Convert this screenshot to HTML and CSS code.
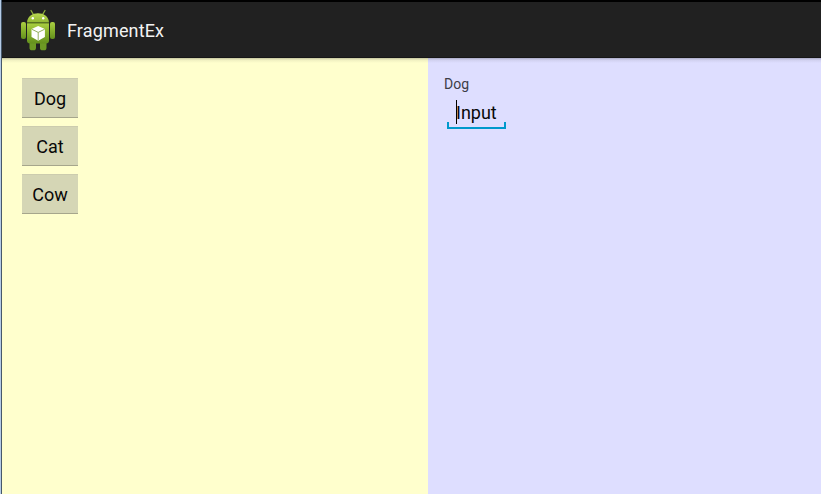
FILE: index.html
```
<!DOCTYPE html>
<html lang="en">
<head>
<meta charset="utf-8">
<title>FragmentEx</title>
<link rel="stylesheet" href="styles.css">
</head>
<body>
<div class="window">
  <header class="action-bar">
    <svg class="app-icon" width="36" height="42" viewBox="0 0 36 42" aria-hidden="true">
      <defs>
        <linearGradient id="body" x1="0" y1="0" x2="0" y2="1">
          <stop offset="0" stop-color="#abcf42"/>
          <stop offset=".5" stop-color="#86b02c"/>
          <stop offset="1" stop-color="#64901d"/>
        </linearGradient>
        <linearGradient id="head" x1="0" y1="0" x2="0" y2="1">
          <stop offset="0" stop-color="#b9d850"/>
          <stop offset="1" stop-color="#92b834"/>
        </linearGradient>
      </defs>
      <path d="M11 1.500l2.700 4.500M25 1.500l-2.700 4.500" stroke="#8fae3c" stroke-width="1.300" stroke-linecap="round"/>
      <rect x="1" y="13" width="5" height="17" rx="2" fill="url(#body)"/>
      <rect x="30" y="13" width="5" height="17" rx="2" fill="url(#body)"/>
      <rect x="9.500" y="29" width="6.500" height="12.300" rx="2.600" fill="#6d9924"/>
      <rect x="20" y="29" width="6.500" height="12.300" rx="2.600" fill="#6d9924"/>
      <path d="M7 14H29V31.500q0 3-3 3H10q-3 0-3-3z" fill="url(#body)"/>
      <path d="M7 13.500C7.500 1.300 28.500 1.300 29 13.500z" fill="url(#head)"/>
      <path d="M7 14H29" stroke="#59791d" stroke-width="1"/>
      <circle cx="12.800" cy="9.300" r="1.200" fill="#fff"/>
      <circle cx="23.200" cy="9.300" r="1.200" fill="#fff"/>
      <path d="M18.200 16.900l6.700 3v8.200l-6.700 3.700-6.700-3.700v-8.200z" fill="#fff"/>
      <path d="M11.700 20.200l6.500 3.200 6.500-3.200M18.200 23.400v8" fill="none" stroke="#799b35" stroke-width=".8"/>
    </svg>
    <h1 class="title">FragmentEx</h1>
  </header>
  <main class="fragments">
    <nav class="list-pane">
      <button class="choice">Dog</button>
      <button class="choice">Cat</button>
      <button class="choice">Cow</button>
    </nav>
    <section class="detail-pane">
      <div class="label">Dog</div>
      <div class="field"><span class="caret"></span>Input</div>
    </section>
  </main>
</div>
</body>
</html>
```
FILE: styles.css
```
* { box-sizing: border-box; }

body {
  margin: 0;
  font-family: Roboto, sans-serif;
  background: #ffffcd;
}

.window {
  display: flex;
  flex-direction: column;
  height: 494px;
  overflow: hidden;
  border-left: 1px solid #b5cbe6;
  box-shadow: inset 1px 0 #46586b;
  padding-left: 1px;
}

.action-bar {
  display: flex;
  align-items: flex-start;
  flex: none;
  height: 58px;
  border-top: 2px solid #000;
  border-bottom: 1px solid #161616;
  background: #212121;
  color: #f3f3f3;
}

.app-icon { margin: 7px 0 0 18px; }

.title {
  margin: 18px 0 0 11px;
  font-size: 18px;
  line-height: 22px;
  font-weight: 400;
  letter-spacing: 0.15px;
}

.fragments {
  display: flex;
  flex: 1;
  background: #ffffcd;
}

.list-pane {
  display: flex;
  flex-direction: column;
  gap: 8px;
  width: 426px;
  padding: 20px;
  background: linear-gradient(#c5c59e, #f0f0c1 2px, #ffffcd 5px);
}

.choice {
  width: 56px;
  height: 40px;
  padding: 2px 0 0;
  border: 0;
  border-top: 1px solid #ccccae;
  border-bottom: 1px solid #a6a68c;
  background: #d5d6b5;
  color: #080808;
  font: 18px/22px Roboto, sans-serif;
}

.detail-pane {
  flex: 1;
  padding: 18px 16px;
  background: linear-gradient(#aaaac5, #d0d0ef 2px, #dedeff 5px);
}

.label {
  font-size: 14px;
  line-height: 17px;
  color: #3d3d46;
}

.field {
  position: relative;
  width: 59px;
  height: 30px;
  margin: 6px 0 0 3px;
  padding: 3px 0 0 9px;
  font-size: 18px;
  line-height: 22px;
  color: #080808;
}

.field::after {
  content: "";
  position: absolute;
  left: 0;
  right: 0;
  bottom: 0;
  height: 5px;
  border: 2px solid #0099cc;
  border-top: 0;
}

.caret {
  position: absolute;
  left: 9px;
  top: 1px;
  width: 1px;
  height: 24px;
  background: #000;
}
```
